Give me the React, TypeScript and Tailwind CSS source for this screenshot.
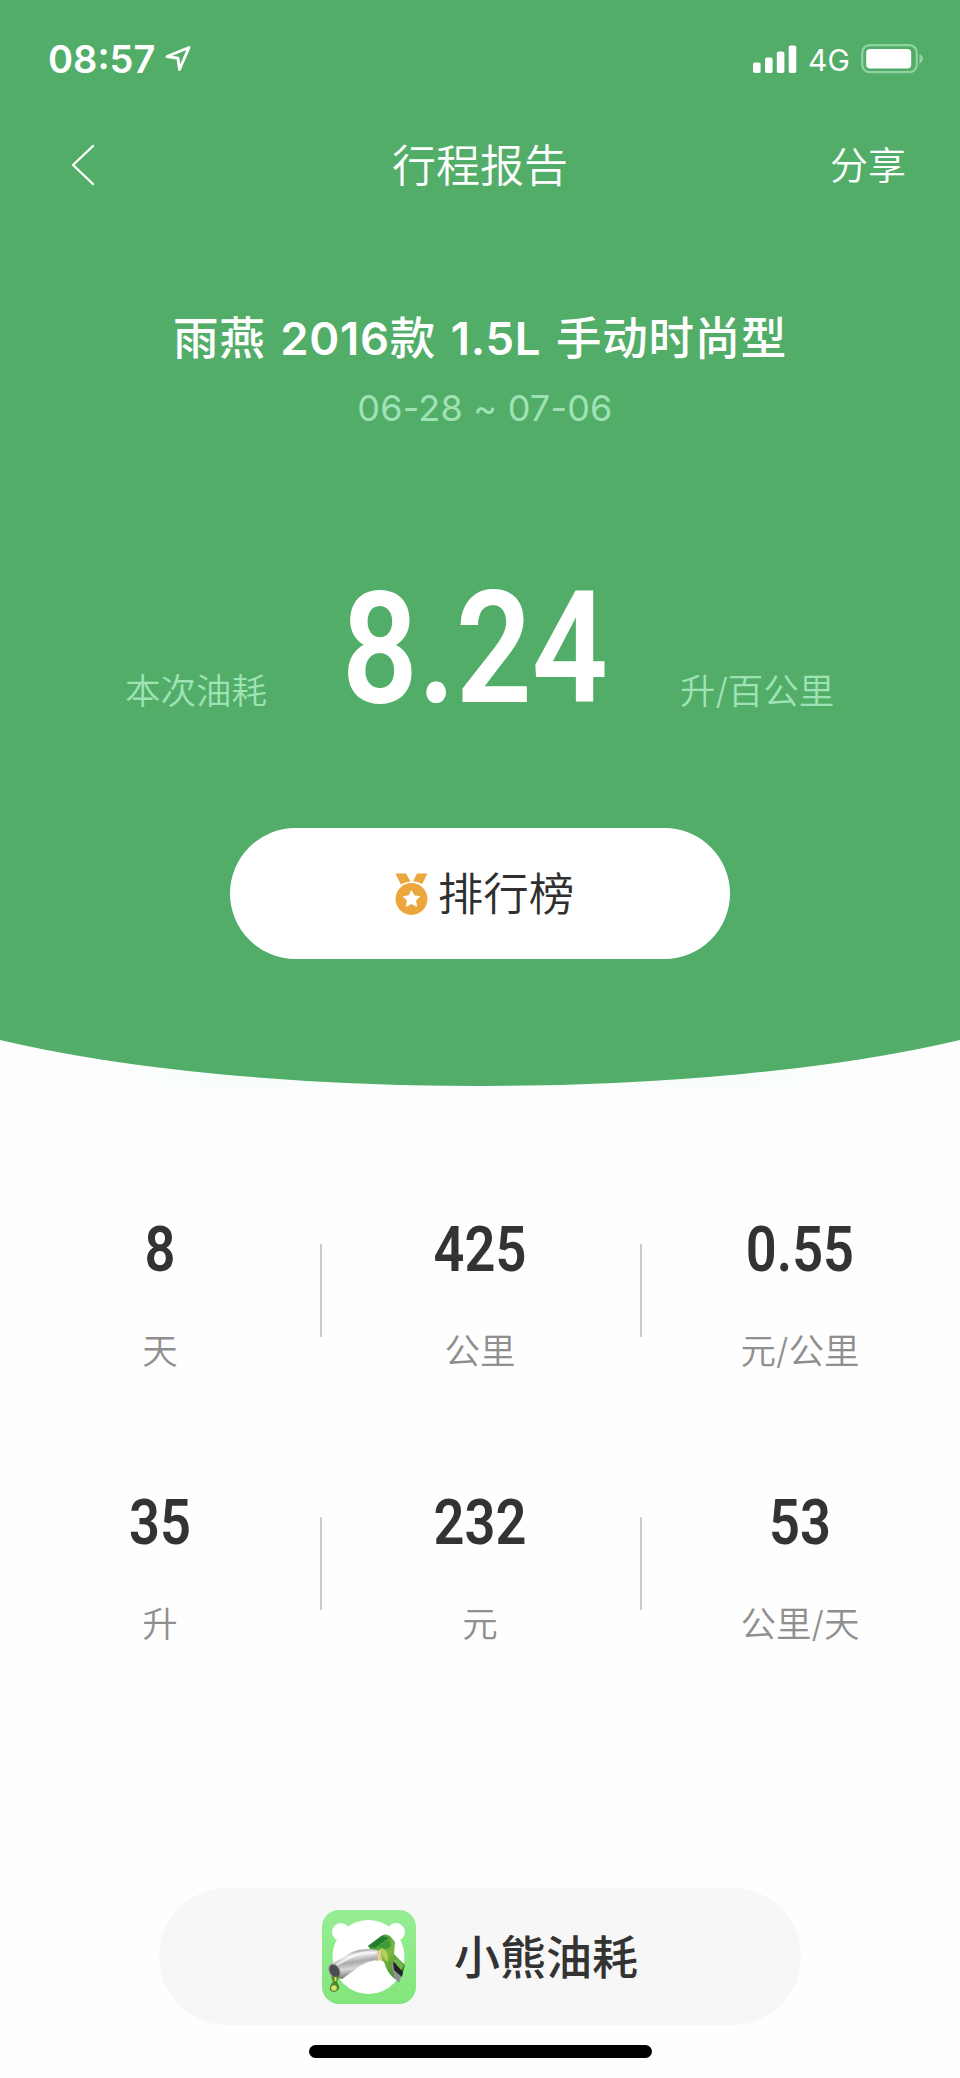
import React from 'react';

type Stat = { value: string; label: string };

const rows: Stat[][] = [
  [
    { value: '8', label: '天' },
    { value: '425', label: '公里' },
    { value: '0.55', label: '元/公里' },
  ],
  [
    { value: '35', label: '升' },
    { value: '232', label: '元' },
    { value: '53', label: '公里/天' },
  ],
];

const StatusBar: React.FC = () => (
  <div className="flex h-[118px] items-center justify-between pl-[48px] pr-[36px]">
    <div className="flex items-center">
      <span className="w-[108px] whitespace-nowrap text-[38px] leading-none font-semibold">08:57</span>
      <svg width="27" height="28" viewBox="0 0 27 28" fill="none" className="ml-[9px]">
        <path d="M2 11.5 24 2.5 14.5 24.5 13 13.2Z" stroke="#fff" strokeWidth="2.9" strokeLinejoin="round" />
      </svg>
    </div>
    <div className="flex items-center">
      <svg width="44" height="28" viewBox="0 0 44 28" fill="#fff">
        <rect x="0" y="17.5" width="7.6" height="10.5" rx="2" />
        <rect x="12" y="12.5" width="7.6" height="15.5" rx="2" />
        <rect x="23.8" y="6.5" width="7.6" height="21.5" rx="2" />
        <rect x="35.7" y="0.5" width="7.6" height="27.5" rx="2" />
      </svg>
      <span className="ml-[11px] w-[42px] pt-[2px] text-[30px] leading-none">4G</span>
      <svg width="63" height="30" viewBox="0 0 63 30" className="ml-[11px]">
        <rect x="1.2" y="1.2" width="54.6" height="27" rx="7.5" fill="none" stroke="#8fd3a3" strokeWidth="2.2" />
        <rect x="5.2" y="5" width="45" height="19.6" rx="4" fill="#fff" />
        <path d="M58.5 10c4.6 1.600 4.600 8 0 9.600Z" fill="#8fd3a3" />
      </svg>
    </div>
  </div>
);

const NavBar: React.FC = () => (
  <div className="grid h-[94px] grid-cols-3 items-center pl-[70px] pr-[54px]">
    <svg width="26" height="42" viewBox="0 0 26 42" fill="none">
      <path d="M23 2 3 21 23 40" stroke="#fff" strokeWidth="2.4" strokeLinecap="round" strokeLinejoin="round" />
    </svg>
    <h1 className="-ml-[16px] pt-[2px] text-center text-[44px] leading-none font-[350]">行程报告</h1>
    <span className="text-right text-[38px] leading-none font-[350]">分享</span>
  </div>
);

const MedalIcon: React.FC = () => (
  <svg width="33" height="42" viewBox="0 0 33 42" fill="#eba63c">
    <path d="M0.500 0.500H11L15.500 8.500Q10 8.800 5.800 11.500ZM22 0.500H32.500L27.200 11Q23 8.500 18.200 8.200Z" />
    <circle cx="16.500" cy="26" r="15.900" />
    <path
      d="m16.500 17.600 2.500 5.200 5.700.8-4.100 4 1 5.700-5.100-2.700-5.100 2.700 1-5.700-4.100-4 5.700-.8Z"
      fill="#fff"
      stroke="#fff"
      strokeWidth="1"
      strokeLinejoin="round"
    />
  </svg>
);

// Bear silhouette with a fuel nozzle in front of it
const AppLogo: React.FC = () => (
  <svg width="94" height="94" viewBox="0 0 94 94">
    <defs>
      <linearGradient id="tile" x1="0" y1="0" x2="0" y2="1">
        <stop offset="0" stopColor="#96ee94" />
        <stop offset="1" stopColor="#83e57b" />
      </linearGradient>
      <linearGradient id="pipe" x1="0.350" y1="0" x2="0.600" y2="1">
        <stop offset="0" stopColor="#777" />
        <stop offset="0.250" stopColor="#eee" />
        <stop offset="0.450" stopColor="#aaa" />
        <stop offset="0.650" stopColor="#d8d8d8" />
        <stop offset="1" stopColor="#555" />
      </linearGradient>
      <linearGradient id="grip" x1="0" y1="0" x2="1" y2="1">
        <stop offset="0" stopColor="#2e8b35" />
        <stop offset="0.500" stopColor="#7cb83f" />
        <stop offset="1" stopColor="#267a2b" />
      </linearGradient>
    </defs>
    <rect width="94" height="94" rx="17" fill="url(#tile)" />
    <circle cx="19" cy="22" r="9" fill="#fff" />
    <circle cx="74" cy="22" r="9" fill="#fff" />
    <ellipse cx="46.500" cy="47" rx="36" ry="37" fill="#fff" />
    <path d="M66 55 72 50 83 56 77 73 73 69Z" fill="#8d9490" />
    <path d="M71 52 82 57 80 67 72 60Z" fill="#222" />
    <path d="M46 36 59 26Q63 23 68 26L73 32 72 44 83 55 81 62 73 50 69 55 73 69Q65 63 62 52L56 48 48 39Z" fill="url(#grip)" />
    <path d="M46 36 60 26 67 28 53 38Z" fill="#237c31" />
    <path d="M57 36 67 30 69 36 60 41Z" fill="#3d9a3f" />
    <path d="M58 38Q67 38 66 52L61 47Z" fill="#b6cf58" />
    <path d="M75 48 82 55 79 60 73 53Z" fill="#71b94d" />
    <path d="M53 41 59 40 60 50 54 51Z" fill="#e4cf91" />
    <path d="M6 56 30 42Q42 37 55 40L56 50Q46 51 38 56L20 69Q10 68 6 56Z" fill="url(#pipe)" />
    <path d="M12 56 33 45Q42 41 53 43" fill="none" stroke="#fff" strokeWidth="2" opacity="0.700" />
    <ellipse cx="12.500" cy="61" rx="5.200" ry="7.500" transform="rotate(-28 12.500 61)" fill="#4c4c50" stroke="#aaa" strokeWidth="1" />
    <path d="M9 66Q14 68 18 65L15 72Q19 77 16 80Q12 84 8 80Q7 76 11 72Z" fill="#54852b" />
    <circle cx="12" cy="78" r="2.800" fill="#d7e76d" />
    <path d="M13.500 67v4" stroke="#d7e76d" strokeWidth="2" />
  </svg>
);

export default function App() {
  return (
    <div className="h-[2078px] w-[960px] overflow-hidden bg-[#fefefe] font-[Inter,'Noto_Sans_CJK_SC',sans-serif] text-[#333]">
      <header className="relative isolate h-[1087px] text-white">
        <svg width="960" height="1087" viewBox="0 0 960 1087" className="absolute inset-0 -z-10">
          <defs>
            <linearGradient id="haze" x1="0" x2="1">
              <stop offset="0" stopColor="#fefefe" />
              <stop offset="0.250" stopColor="#f8fdfb" />
              <stop offset="0.750" stopColor="#f8fdfb" />
              <stop offset="1" stopColor="#fefefe" />
            </linearGradient>
          </defs>
          <rect y="1030" width="960" height="57" fill="url(#haze)" />
          <path d="M0 0H960V1040A650 141 0 0 1 0 1040Z" fill="#52ad69" />
        </svg>

        <StatusBar />
        <NavBar />

        <div className="mt-[99px] flex flex-col items-center">
          <h2 className="text-[45.500px] leading-[56px] font-medium tracking-[0.700px] whitespace-nowrap [word-spacing:2px]">
            雨燕 <span className="font-semibold">2016</span>款 <span className="font-semibold">1.5L</span> 手动时尚型
          </h2>
          <p className="mt-[14px] pl-[10px] text-[36px] leading-[54px] tracking-[0.200px] text-[#9fe2b6]">06-28 ~ 07-06</p>
        </div>

        <div className="mt-[144px] flex h-[140px] items-end justify-between pr-[126px] pl-[125px] text-[35.500px] font-[350] text-[#9fe2b6]">
          <span className="w-[144px] leading-[54px] whitespace-nowrap">本次油耗</span>
          <span className="-mb-[5px] flex w-[260px] justify-center">
            <span className="inline-block scale-x-[0.86] font-[Roboto] text-[155px] leading-[150px] font-semibold text-white">8.24</span>
          </span>
          <span className="w-[154px] leading-[54px] whitespace-nowrap">升/百公里</span>
        </div>

        <button className="mx-auto mt-[109px] flex h-[131px] w-[500px] items-center justify-center gap-[10px] rounded-full bg-white pl-[9px] text-[#2f2f2f]">
          <MedalIcon />
          <span className="pt-[3px] text-[45.500px] leading-none font-[350]">排行榜</span>
        </button>
      </header>

      <main className="pt-[124px]">
        {rows.map((row, i) => (
          <div key={i} className="grid h-[273px] grid-cols-3">
            {row.map((stat, j) => (
              <div key={stat.label} className="relative flex flex-col items-center">
                <span className="inline-block scale-x-[0.86] font-[Roboto] text-[63px] leading-[78px] font-semibold">{stat.value}</span>
                <span className="mt-[36px] text-[35.500px] leading-[54px] font-[350] text-[#8f8f8f]">{stat.label}</span>
                {j < 2 && <i className="absolute top-[33px] -right-[2px] h-[93px] w-[2px] bg-[#ccc]" />}
              </div>
            ))}
          </div>
        ))}
      </main>

      <footer className="mt-[131px] flex flex-col items-center">
        <div className="flex h-[137px] w-[642px] items-center rounded-full bg-[#f7f7f7] pl-[163px]">
          <AppLogo />
          <span className="ml-[38px] text-[46px] leading-none font-medium">小熊油耗</span>
        </div>
        <div className="mt-[20px] h-[13px] w-[343px] rounded-full bg-black" />
      </footer>
    </div>
  );
}
